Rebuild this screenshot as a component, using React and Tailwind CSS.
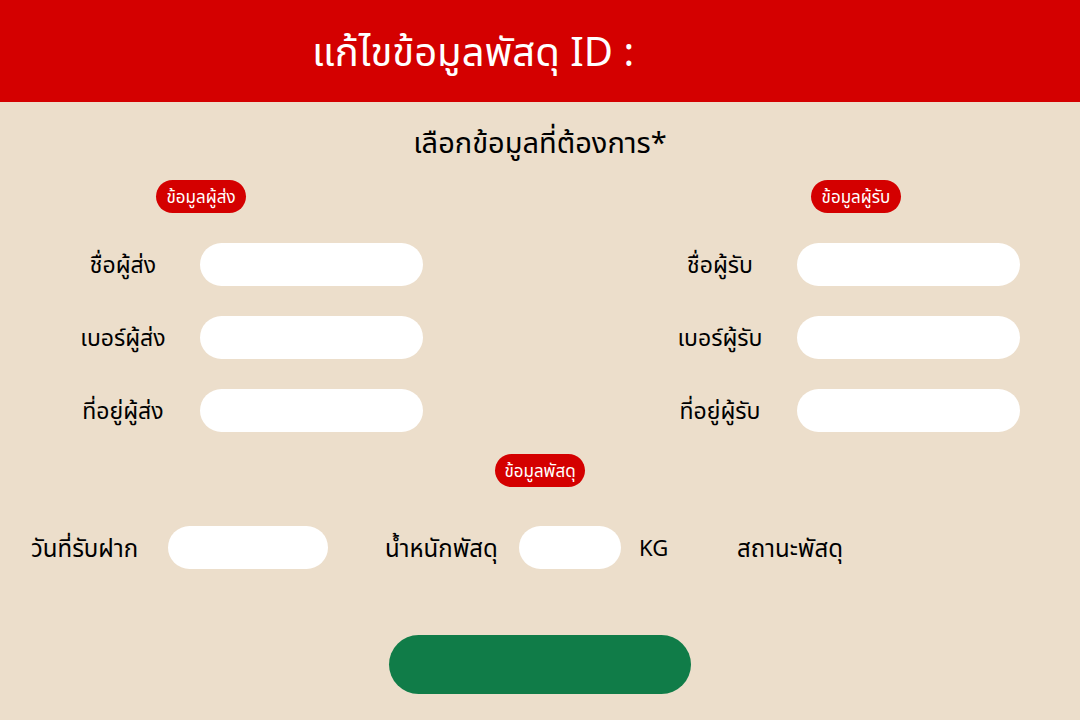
export default function App() {
  const font = { fontFamily: '"Noto Sans", "Noto Sans Thai", "DejaVu Sans", sans-serif' };
  const Input = ({ w }) => (
    <div className={`h-[43px] ${w} rounded-[22px] bg-white`} />
  );
  const Row = ({ label }) => (
    <div className="flex items-center h-[43px]">
      <div className="w-[154px] text-center text-[23px] text-black">{label}</div>
      <Input w="w-[223px]" />
    </div>
  );
  const Badge = ({ children }) => (
    <div className="h-[33px] w-[90px] rounded-full bg-[#d40000] text-white text-[17px] flex items-center justify-center">
      {children}
    </div>
  );
  return (
    <div className="w-[1080px] h-[720px] bg-[#ecdecb] flex flex-col overflow-hidden" style={font}>
      <div className="h-[102px] bg-[#d40000] flex items-center pl-[312px] shrink-0">
        <div className="text-white text-[40px] leading-none">แก้ไขข้อมูลพัสดุ ID :</div>
      </div>
      <div className="h-[80px] flex items-center justify-center text-[29px] text-black">เลือกข้อมูลที่ต้องการ*</div>
      <div className="flex h-[33px] -mt-[2px]">
        <div className="ml-[156px]"><Badge>ข้อมูลผู้ส่ง</Badge></div>
        <div className="ml-[565px]"><Badge>ข้อมูลผู้รับ</Badge></div>
      </div>
      <div className="flex mt-[30px]">
        <div className="ml-[46px] flex flex-col gap-[30px]">
          <Row label="ชื่อผู้ส่ง" />
          <Row label="เบอร์ผู้ส่ง" />
          <Row label="ที่อยู่ผู้ส่ง" />
        </div>
        <div className="ml-[220px] flex flex-col gap-[30px]">
          <Row label="ชื่อผู้รับ" />
          <Row label="เบอร์ผู้รับ" />
          <Row label="ที่อยู่ผู้รับ" />
        </div>
      </div>
      <div className="flex justify-center mt-[22px]">
        <Badge>ข้อมูลพัสดุ</Badge>
      </div>
      <div className="flex items-center h-[43px] mt-[39px] text-[24px] text-black">
        <div className="ml-[31px] w-[137px]">วันที่รับฝาก</div>
        <Input w="w-[160px]" />
        <div className="ml-[57px] w-[134px]">น้ำหนักพัสดุ</div>
        <Input w="w-[102px]" />
        <div className="ml-[18px] w-[98px] text-[22px]">KG</div>
        <div>สถานะพัสดุ</div>
      </div>
      <div className="flex justify-center mt-[66px]">
        <div className="h-[59px] w-[302px] rounded-full bg-[#107c48]" />
      </div>
    </div>
  );
}
